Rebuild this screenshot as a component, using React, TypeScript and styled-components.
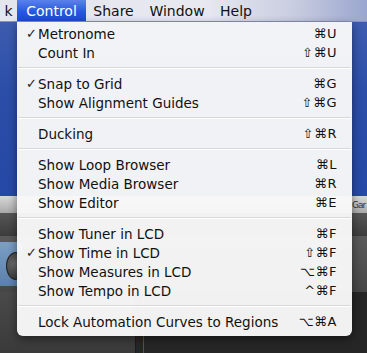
import * as React from 'react';
import styled, { createGlobalStyle } from 'styled-components';

const GlobalStyle = createGlobalStyle`
    html, body {
        margin: 0;
        padding: 0;
        background: #222;
    }
    body {
        font-family: "DejaVu Sans", "Liberation Sans", sans-serif;
    }
`;

const Screen = styled.div`
    position: relative;
    width: 367px;
    height: 353px;
    overflow: hidden;
    display: flex;
    flex-direction: column;
`;

const MenuBar = styled.div`
    height: 22px;
    display: flex;
    align-items: stretch;
    background: linear-gradient(90deg, #e4e6ee 0%, #e8e9f0 55%, #c9cde0 80%, #9aa6cf 100%);
    border-bottom: 1px solid #8a93b8;
    box-sizing: border-box;
    font-size: 14px;
    color: #111;
`;

const BarItem = styled.div<{ active?: boolean; width: number }>`
    width: ${p => p.width}px;
    display: flex;
    align-items: center;
    justify-content: center;
    color: ${p => (p.active ? '#fff' : '#111')};
    background: ${p => (p.active ? 'linear-gradient(#5a82ea, #2456dd 60%, #1d4ccf)' : 'transparent')};
`;

const Desktop = styled.div`
    flex: 1;
    display: flex;
    flex-direction: column;
`;

const BlueSky = styled.div`
    height: 174px;
    background: linear-gradient(180deg, #3d5cb0 0%, #2c4ea8 40%, #2648a6 100%);
`;

const TitleBar = styled.div`
    height: 17px;
    padding-left: 352px;
    background: linear-gradient(#d8d8d8, #a9a9a9);
    border-bottom: 1px solid #555;
    display: flex;
    align-items: center;
    font-size: 9px;
    letter-spacing: -1px;
    color: #333;
    overflow: hidden;
    white-space: nowrap;
`;

const Toolbar = styled.div`
    height: 22px;
    background: linear-gradient(#555, #3c3c3c);
`;

const LcdRow = styled.div`
    height: 56px;
    display: flex;
    background: linear-gradient(#5a5a5a, #464646);
`;

const Lcd = styled.div`
    width: 22px;
    margin: 6px 0;
    background: linear-gradient(#7c9ec4, #5b80ab);
    border-radius: 0 4px 4px 0;
    overflow: hidden;
`;

const Knob = styled.div`
    width: 18px;
    height: 26px;
    margin: 10px 0 0 6px;
    border-radius: 50%;
    background: radial-gradient(circle at 40% 40%, #6b6b6b, #2f2f2f);
    border: 1px solid #222;
`;

const Tracks = styled.div`
    flex: 1;
    display: flex;
    background: #3e3e3e;
`;

const TrackHeader = styled.div`
    width: 135px;
    background: linear-gradient(#4a4a4a, #3a3a3a);
    border-right: 1px solid #1c1c1c;
`;

const Timeline = styled.div`
    flex: 1;
    display: flex;
    background: #262626;
`;

const Playhead = styled.div`
    width: 1px;
    margin-left: 7px;
    background: #c82020;
`;

const DropMenu = styled.div`
    position: absolute;
    left: 17px;
    top: 22px;
    width: 335px;
    padding: 2px 0 5px;
    box-sizing: border-box;
    background: rgba(248, 248, 248, 0.97);
    border-radius: 0 0 6px 6px;
    box-shadow: 0 3px 10px rgba(0, 0, 0, 0.45);
    font-size: 13.5px;
    color: #111;
`;

const MenuRow = styled.div`
    height: 19px;
    display: flex;
    align-items: center;
    padding: 0 15px 0 9px;
`;

const Check = styled.span`
    width: 12px;
    font-size: 13px;
    font-weight: bold;
    color: #222;
`;

const Label = styled.span`
    flex: 1;
    white-space: nowrap;
`;

const Shortcut = styled.span`
    white-space: nowrap;
    letter-spacing: 0.5px;
    font-size: 13px;
`;

const Separator = styled.div`
    height: 1px;
    margin: 5px 1px 5px;
    background: #d8d8d8;
    border-bottom: 1px solid #fff;
`;

type Entry = { label: string; key: string; checked?: boolean } | 'sep';

const entries: Entry[] = [
    { label: 'Metronome', key: '⌘U', checked: true },
    { label: 'Count In', key: '⇧⌘U' },
    'sep',
    { label: 'Snap to Grid', key: '⌘G', checked: true },
    { label: 'Show Alignment Guides', key: '⇧⌘G' },
    'sep',
    { label: 'Ducking', key: '⇧⌘R' },
    'sep',
    { label: 'Show Loop Browser', key: '⌘L' },
    { label: 'Show Media Browser', key: '⌘R' },
    { label: 'Show Editor', key: '⌘E' },
    'sep',
    { label: 'Show Tuner in LCD', key: '⌘F' },
    { label: 'Show Time in LCD', key: '⇧⌘F', checked: true },
    { label: 'Show Measures in LCD', key: '⌥⌘F' },
    { label: 'Show Tempo in LCD', key: '^⌘F' },
    'sep',
    { label: 'Lock Automation Curves to Regions', key: '⌥⌘A' },
];

const App = () => {
    return (
        <Screen>
            <GlobalStyle />
            <MenuBar>
                <BarItem width={17}>k</BarItem>
                <BarItem width={69} active>Control</BarItem>
                <BarItem width={55}>Share</BarItem>
                <BarItem width={72}>Window</BarItem>
                <BarItem width={46}>Help</BarItem>
            </MenuBar>
            <Desktop>
                <BlueSky />
                <TitleBar>Gar</TitleBar>
                <Toolbar />
                <LcdRow>
                    <Lcd>
                        <Knob />
                    </Lcd>
                </LcdRow>
                <Tracks>
                    <TrackHeader />
                    <Timeline>
                        <Playhead />
                    </Timeline>
                </Tracks>
            </Desktop>
            <DropMenu>
                {entries.map((e, i) =>
                    e === 'sep' ? (
                        <Separator key={i} />
                    ) : (
                        <MenuRow key={i}>
                            <Check>{e.checked ? '✓' : ''}</Check>
                            <Label>{e.label}</Label>
                            <Shortcut>{e.key}</Shortcut>
                        </MenuRow>
                    )
                )}
            </DropMenu>
        </Screen>
    );
};

export default App;
